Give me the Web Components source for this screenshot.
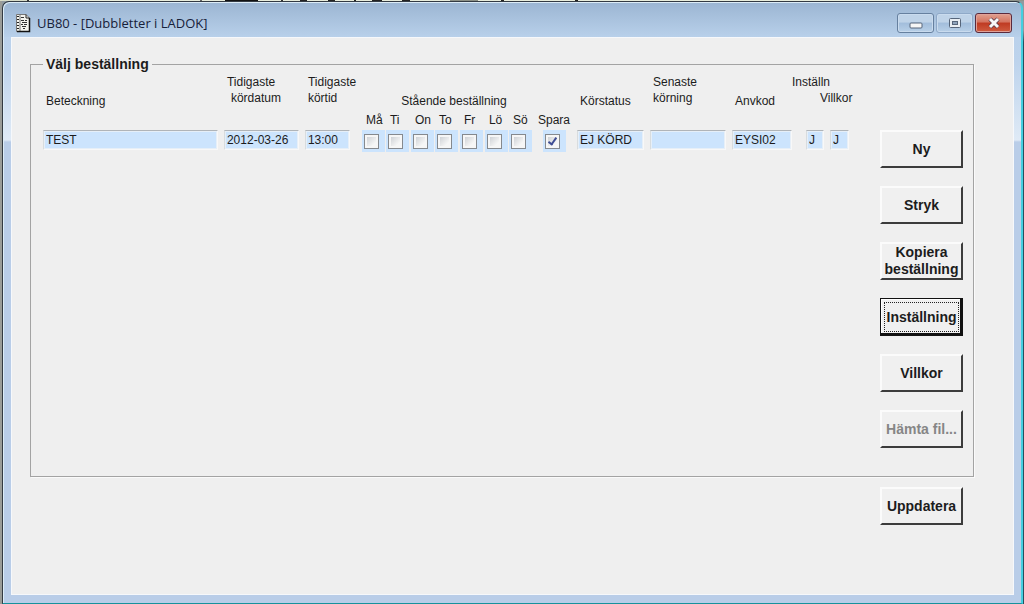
<!DOCTYPE html>
<html lang="sv">
<head>
<meta charset="utf-8">
<title>UB80 - [Dubbletter i LADOK]</title>
<style>
  html, body { margin: 0; }
  body {
    min-height: 100vh;
    display: flex;
    box-sizing: border-box;
    padding: 1px 1px 0 2px;
    background:
      linear-gradient(90deg, #d8dcc8 0 27px, #333 27px 29px, #e9eddc 29px 200px, #666 200px 202px, #e9eddc 202px 225px, #111 225px 258px, #e9eddc 258px 281px, #333 281px 283px, #e9eddc 283px 300px, #222 300px 307px, #e9eddc 307px 328px, #222 328px 335px, #e9eddc 335px 354px, #222 354px 356px, #e9eddc 356px 372px, #222 372px 382px, #e9eddc 382px 402px, #222 402px 410px, #e9eddc 410px 450px, #8c9086 450px 478px, #e9eddc 478px 501px, #222 501px 504px, #e9eddc 504px 575px, #222 575px 578px, #e9eddc 578px 900px, #8f948c 900px) 0 0 / 100% 1px no-repeat,
      linear-gradient(#9a9c98, #9a9c98) 0 0 / 2px 100% no-repeat,
      linear-gradient(#8f9aa0 0 30px, #24505f 42px);
    font-family: "Liberation Sans", Arial, sans-serif;
    font-size: 12px;
    color: #1c1c1c;
  }
  app-window { flex: 1; }
</style>
</head>
<body>
<app-window caption="UB80 - [Dubbletter i LADOK]">
  <order-group caption="Välj beställning">
    <order-table></order-table>
    <push-button slot="actions">Ny</push-button>
    <push-button slot="actions">Stryk</push-button>
    <push-button slot="actions">Kopiera beställning</push-button>
    <push-button slot="actions" current>Inställning</push-button>
    <push-button slot="actions">Villkor</push-button>
    <push-button slot="actions" disabled>Hämta fil...</push-button>
  </order-group>
  <push-button slot="footer">Uppdatera</push-button>
</app-window>

<script>
class AppWindow extends HTMLElement {
  constructor() {
    super();
    this.attachShadow({ mode: 'open' }).innerHTML = `
      <style>
        :host {
          display: flex; flex-direction: column; box-sizing: border-box;
          border: 1px solid #333a42; border-right: 2px solid #45cfe0; border-bottom: 1px solid #16929c;
          border-radius: 7px 7px 0 0;
          padding: 0 7px 8px 8px;
          background:
            linear-gradient(#9bb5d2, #b8d0ea) 0 0 / 100% 35px no-repeat,
            linear-gradient(#b8d0ea 0, #bdd3ec 60px, #dfeaf6 138px, #b9cde8 140px);
          box-shadow: inset 1px 1px 0 #dcecf6;
        }
        header { display: flex; align-items: center; height: 35px; box-sizing: border-box; padding: 6px 2px 0 4px; }
        h1 { flex: 1; margin: 0 0 0 6px; font: 13px/16px "Open Sans", sans-serif; color: #17213a; }
        .controls { display: flex; gap: 2px; }
        .controls button {
          width: 37px; height: 20px; padding: 0; box-sizing: border-box;
          display: grid; place-items: center;
          border: 1px solid #66809f; border-radius: 3px;
          background: linear-gradient(#bfd3e8 0 45%, #a2bddb 50%, #b8d0e8);
          box-shadow: inset 0 0 0 1px #c9dbee;
        }
        .controls .max { border-color: #8fa9c8; }
        .controls .close {
          border-color: #5a2a3c;
          background: linear-gradient(#e0a090 0, #d4735f 45%, #bf3a22 50%, #cf5c40);
          box-shadow: inset 0 0 0 1px #e0a198;
        }
        svg { display: block; }
        main { flex: 1; background: #efefef; border: 1px solid #f6f8fb; box-sizing: border-box; padding: 18px 39px 18px 18px; }
        footer { display: flex; justify-content: flex-end; padding: 10px 11px 0; }
      </style>
      <header>
        <svg width="16" height="20" viewBox="0 0 16 20" aria-hidden="true">
          <path d="M1.500 1.500H11L14.500 5V18.500H1.500Z" fill="#f4f4ee" stroke="#777"/>
          <path d="M11 1.500V5H14.500" fill="none" stroke="#222"/>
          <path d="M5 1V19" stroke="#777"/>
          <path d="M2 3.500H4M2 6.500H4M2 9.500H4M2 12.500H4M2 15.500H4" stroke="#222"/>
          <path d="M6 4.500H9M6 7.500H9M10 7.500H12M7 9.500H12M6 11.500H8M9 11.500H12M7 13.500H11M8 15.500H10" stroke="#333"/>
          <path d="M14.500 5V18.500H2" fill="none" stroke="#111" stroke-width="1.500"/>
        </svg>
        <h1></h1>
        <div class="controls">
          <button type="button" aria-label="Minimera"><svg width="14" height="14" viewBox="0 0 14 14"><rect x="1" y="7" width="12" height="5" rx="1" fill="#f6f6f6" stroke="#56657a"/></svg></button>
          <button type="button" class="max" aria-label="Maximera"><svg width="14" height="14" viewBox="0 0 14 14"><rect x="1.500" y="2.500" width="11" height="9" rx="1" fill="#e8edf2" stroke="#56657a"/><rect x="4.500" y="5.500" width="5" height="3" fill="#8ea3bb" stroke="#56657a"/></svg></button>
          <button type="button" class="close" aria-label="Stäng"><svg width="14" height="12" viewBox="0 0 14 12"><path d="M3 2L11 10M11 2L3 10" stroke="#55394a" stroke-width="4.500"/><path d="M3 2L11 10M11 2L3 10" stroke="#f8f8f8" stroke-width="3"/></svg></button>
        </div>
      </header>
      <main><slot></slot><footer><slot name="footer"></slot></footer></main>`;
    this.shadowRoot.querySelector('h1').textContent = this.getAttribute('caption');
  }
}

class OrderGroup extends HTMLElement {
  constructor() {
    super();
    this.attachShadow({ mode: 'open' }).innerHTML = `
      <style>
        :host { display: block; }
        fieldset { margin: 0; min-width: 0; padding: 0 10px 28px 12px; border: 1px solid #a3a3a3; box-shadow: 1px 1px 0 #fafafa; }
        legend { padding: 0 3px; font-size: 14px; line-height: 16px; font-weight: bold; }
        .row { display: flex; gap: 18px; }
        .table { flex: 1; min-width: 0; padding-top: 2px; }
        .actions { width: 83px; display: flex; flex-direction: column; gap: 18px; padding-top: 58px; }
      </style>
      <fieldset>
        <legend></legend>
        <div class="row">
          <div class="table"><slot></slot></div>
          <div class="actions"><slot name="actions"></slot></div>
        </div>
      </fieldset>`;
    this.shadowRoot.querySelector('legend').textContent = this.getAttribute('caption');
  }
}

class PushButton extends HTMLElement {
  constructor() {
    super();
    this.attachShadow({ mode: 'open' }).innerHTML = `
      <style>
        :host { display: block; width: 83px; }
        button {
          width: 100%; height: 38px; box-sizing: border-box; padding: 0;
          border: 2px solid; border-color: #fbfbfb #3c3c3c #3c3c3c #fbfbfb;
          background: #f0f0f0; color: #1c1c1c;
          font: bold 14px/17px "Liberation Sans", Arial, sans-serif;
        }
        button:disabled { color: #868686; }
        :host([current]) button {
          padding: 2px 0 0 2px;
          border: 1px solid #111; border-right-width: 3px; border-bottom-width: 3px;
          outline: 1px dotted #222; outline-offset: -5px;
          box-shadow: inset 1px 1px 0 #fff;
        }
      </style>
      <button type="button"><slot></slot></button>`;
    this.shadowRoot.querySelector('button').disabled = this.hasAttribute('disabled');
  }
}

class OrderTable extends HTMLElement {
  constructor() {
    super();
    const days = ['Må', 'Ti', 'On', 'To', 'Fr', 'Lö', 'Sö'];
    const field = (label, value, size) =>
      `<td class="${size}"><input type="text" class="field" readonly aria-label="${label}" value="${value}"></td>`;
    this.attachShadow({ mode: 'open' }).innerHTML = `
      <style>
        :host { display: block; }
        table { width: 100%; table-layout: fixed; border-collapse: collapse; line-height: 16px; }
        th, td { padding: 0; text-align: left; vertical-align: bottom; font-weight: normal; white-space: nowrap; }
        thead tr:first-child th { height: 35px; padding: 0 0 3px 3px; }
        thead th.top { vertical-align: top; }
        thead tr:first-child th.group { text-align: center; padding-left: 12px; }
        thead .second { padding-left: 4px; }
        thead tr:first-child th.pair { padding-left: 0; }
        thead .last { padding-left: 28px; }
        thead tr + tr th { height: 18px; vertical-align: top; padding-left: 4px; }
        td { vertical-align: top; }
        .field {
          display: block; width: 100%; height: 20px; box-sizing: border-box; margin: 0; padding: 0 2px;
          border: 1px solid; border-color: #b0b4b8 #f8f8f8 #f8f8f8 #d8dcde; outline: 0;
          box-shadow: inset 0 0 0 1px #e6eff8;
          background: #cce4fd; color: #1c1c1c; font: 12px/16px "Liberation Sans", Arial, sans-serif;
        }
        td.s { padding-right: 6px; }
        td.m { padding-right: 12px; }
        td.flag { padding-left: 14px; padding-right: 6px; }
        td.end { padding-right: 13px; }
        .tick { display: block; width: 23px; height: 22px; box-sizing: border-box; padding: 4px 0 0 2px; background: #cce4fd; }
        .spara { padding-left: 9px; }
        input[type=checkbox] {
          appearance: none; display: block; position: relative; width: 15px; height: 15px; box-sizing: border-box; margin: 0;
          border: 1px solid #85898e;
          background: linear-gradient(135deg, #c4c8cd, #f6f6f6 70%);
          box-shadow: inset 0 0 0 2px #f6f6f6;
        }
        input:checked::before {
          content: ""; position: absolute; left: 4px; top: 1px; width: 3px; height: 7px;
          border: solid #3f4d94; border-width: 0 2px 2px 0; transform: rotate(35deg);
        }
      </style>
      <table>
        <colgroup>
          <col><col style="width:81px"><col style="width:57px">
          <col style="width:24px"><col style="width:25px"><col style="width:24px"><col style="width:25px"><col style="width:25px"><col style="width:24px"><col style="width:25px">
          <col style="width:43px"><col style="width:73px"><col style="width:82px"><col style="width:60px"><col style="width:38px"><col style="width:32px">
        </colgroup>
        <thead>
          <tr>
            <th scope="col">Beteckning</th>
            <th scope="col" class="top">Tidigaste<div class="second">kördatum</div></th>
            <th scope="col" class="top">Tidigaste<div>körtid</div></th>
            <th scope="colgroup" colspan="7" class="group">Stående beställning</th>
            <th></th>
            <th scope="col">Körstatus</th>
            <th scope="col" class="top">Senaste<div>körning</div></th>
            <th scope="col">Anvkod</th>
            <th scope="colgroup" colspan="2" class="top pair">Inställn<div class="last">Villkor</div></th>
          </tr>
          <tr>
            <th colspan="3"></th>
            ${days.map((d, i) => `<th scope="col"><label for="d${i}">${d}</label></th>`).join('')}
            <th scope="col"><label for="spara">Spara</label></th>
            <th colspan="5"></th>
          </tr>
        </thead>
        <tbody>
          <tr>
            ${field('Beteckning', 'TEST', 's')}
            ${field('Tidigaste kördatum', '2012-03-26', 's')}
            ${field('Tidigaste körtid', '13:00', 'm')}
            ${days.map((d, i) => `<td><span class="tick"><input type="checkbox" id="d${i}"></span></td>`).join('')}
            <td class="spara"><span class="tick"><input type="checkbox" id="spara" checked></span></td>
            ${field('Körstatus', 'EJ KÖRD', 's')}
            ${field('Senaste körning', '', 's')}
            ${field('Anvkod', 'EYSI02', '')}
            ${field('Inställn', 'J', 'flag')}
            ${field('Villkor', 'J', 'end')}
          </tr>
        </tbody>
      </table>`;
  }
}

customElements.define('app-window', AppWindow);
customElements.define('order-group', OrderGroup);
customElements.define('push-button', PushButton);
customElements.define('order-table', OrderTable);
</script>
</body>
</html>
